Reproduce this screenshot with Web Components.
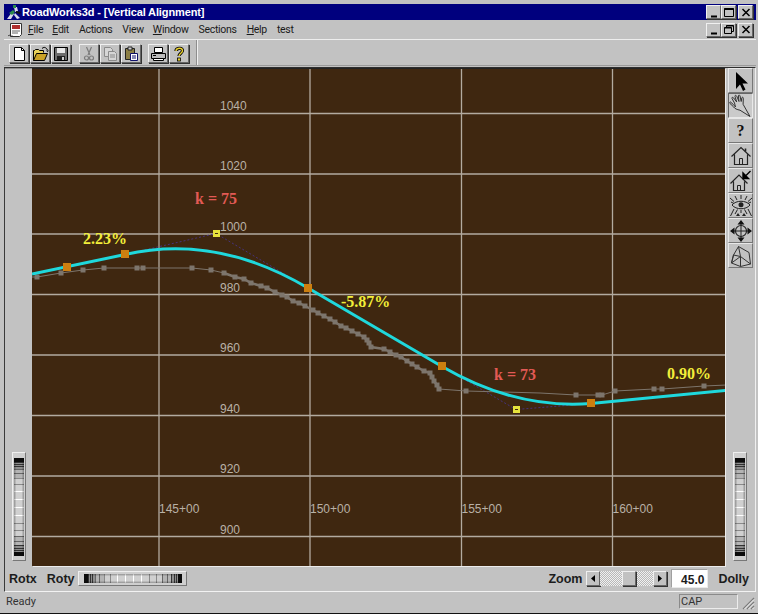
<!DOCTYPE html>
<html>
<head>
<meta charset="utf-8">
<title>RoadWorks3d</title>
<style>
  html, body { margin: 0; padding: 0; background: #c2c2c2; }
  body { font-family: "Liberation Sans", Arial, sans-serif; overflow: hidden; }
</style>
</head>
<body>
<rw-window>
  <rw-titlebar slot="title">RoadWorks3d - [Vertical Alignment]</rw-titlebar>
  <rw-menubar slot="menu"></rw-menubar>
  <rw-toolbar slot="tools"></rw-toolbar>
  <rw-child slot="child">
    <rw-wheel slot="left" dir="v"></rw-wheel>
    <rw-plot slot="plot"></rw-plot>
    <rw-sidetools slot="side"></rw-sidetools>
    <rw-wheel slot="right" dir="v"></rw-wheel>
    <rw-controls slot="controls"></rw-controls>
  </rw-child>
  <rw-statusbar slot="status"></rw-statusbar>
</rw-window>

<script>
// shared win95 bevels
const RAISED = 'border: 1px solid; border-color: #f0f0f0 #666 #666 #f0f0f0; box-shadow: 1px 1px 0 #333;';

const ICONS = {
  doc: '<path d="M4.5 2.5h7l3 3v10h-10z" fill="#fff" stroke="#000"/><path d="M11.5 2.5v3h3" fill="none" stroke="#000"/>',
  open: '<path d="M2.5 15.5v-10h1l1-1h3l1 1h4v2" fill="#e8d25a" stroke="#000"/><path d="M2.5 15.5l3-7h11l-3 7z" fill="#c9a227" stroke="#000"/><path d="M11 3.5c1.5-1.5 3-1.5 4.5 0l1 1.5" fill="none" stroke="#000"/><path d="M15 5.5h3l-1.5 1.5z" fill="#000"/>',
  save: '<path d="M2.5 2.5h13v13h-13z" fill="#6d6d6d" stroke="#000"/><path d="M5 3h8v5H5z" fill="#e8e8e8"/><path d="M5 11h8v4H5z" fill="#202020"/><path d="M10 12h2v3h-2z" fill="#d0d0d0"/>',
  cut: '<path d="M6.5 2l3.5 8M11.5 2L8 10" stroke="#7c7c7c" stroke-width="1.2" fill="none"/><circle cx="6.5" cy="13" r="2" fill="none" stroke="#7c7c7c" stroke-width="1.2"/><circle cx="11.5" cy="13" r="2" fill="none" stroke="#7c7c7c" stroke-width="1.2"/>',
  copy: '<path d="M3.5 2.5h6l2 2v7h-8z" fill="#d6d6d6" stroke="#8a8a8a"/><path d="M7.5 6.5h6l2 2v7h-8z" fill="#d6d6d6" stroke="#8a8a8a"/><path d="M9 10h5M9 12h5" stroke="#8a8a8a"/>',
  paste: '<path d="M3.5 3.5h9v11h-9z" fill="#8c7f45" stroke="#222"/><path d="M6 2h4v3H6z" fill="#cfcfcf" stroke="#222"/><path d="M8.5 8.5h7v7h-7z" fill="#fff" stroke="#10106a"/><path d="M10 11h4M10 13h4" stroke="#10106a" stroke-width="1.2"/>',
  print: '<path d="M5.5 2.5h8v5h-8z" fill="#fff" stroke="#000"/><path d="M2.5 8.5h14v5h-14z" fill="#bdbdbd" stroke="#000"/><path d="M4.5 13.5h10v2h-10z" fill="#fff" stroke="#000"/><path d="M4 10.5h3" stroke="#000"/>',
  help: '<path d="M6 6c0-3 6-4 6.5-.5.3 2.5-3.5 3-3.5 5.5" fill="none" stroke="#000" stroke-width="3.2"/><path d="M6 6c0-3 6-4 6.5-.5.3 2.5-3.5 3-3.5 5.5" fill="none" stroke="#e8d030" stroke-width="1.4"/><rect x="7.5" y="13" width="3" height="3" fill="#e8d030" stroke="#000" stroke-width=".8"/>',
  arrow: '<path d="M7 3v17l4-4.5 3 6.5 2.5-1.5-3-6h5.5z" fill="#000"/>',
  hand: '<path d="M1.5 8c2 1.5 3.5 3 5 5l-1-4L3 4.5c-.5-1.5 1-1.5 1.700-.5l3 4L6 2.500c-.3-1.400 1-1.500 1.700-.4L10 7.500 9.400 2c0-1.300 1.200-1.200 1.600-.2l1.200 5.700.6-3.500c.4-1.200 1.500-1 1.500.3l-.2 6 6.900 12.200-10-6.300c-3-.6-5.200-1.400-6.500-3.400L1 9.500c-.6-1 .1-2 .5-1.500z" fill="none" stroke="#333"/>',
  home: '<path d="M2.5 12.500L12 3.500l9.500 9M5.500 10.500v10h13v-10" fill="none" stroke="#222" stroke-width="1.2"/><path d="M16.500 4.500v3" stroke="#222" stroke-width="1.6"/><path d="M10.500 14.500h3v6h-3z" fill="none" stroke="#222"/>',
  homego: '<path d="M1.500 14.500L10 6l8.500 8.500M4.500 12.500v9h11v-9" fill="none" stroke="#222" stroke-width="1.2"/><path d="M8.500 16.500h3v5h-3z" fill="none" stroke="#222"/><path d="M21.500 2l-6 6M14 4v5.500h5.500z" stroke="#000" stroke-width="1.4" fill="#000"/>',
  eye: '<path d="M3 11c4-5 14-5 18 0-4 5-14 5-18 0z" fill="#c2c2c2" stroke="#222"/><circle cx="12" cy="10.8" r="2.5" fill="#222"/><path d="M12 1v4M6 2l2 4M18 2l-2 4M1 4l4 3.500M23 4l-4 3.500M2 8l3 1.500M22 8l-3 1.500M5 15L1.500 22M19 15l3.500 7M8.500 15.500L6 20M15.500 15.500L18 20M12 16v3" stroke="#222"/><path d="M7 22l2-3 2 3zM13 22l2-3 2 3z" fill="#222"/>',
  move: '<circle cx="12" cy="12" r="5.500" fill="none" stroke="#222" stroke-width="1.2"/><path d="M12 4v16M4 12h16" stroke="#222"/><path d="M12 1l3.500 4.500h-7zM12 23l3.500-4.500h-7zM1 12l4.500-3.500v7zM23 12l-4.500-3.500v7z" fill="#111"/>',
  box: '<path d="M9.500 2.500L20 8.500l1.500 11.500-10 2.500-9-3.500L4.500 11z M9.500 2.500l2 10 10 7.500 M11.500 12.500L4.500 11 M11.500 12.500v10M4.500 11l-2 8 9-6.500" fill="none" stroke="#333"/>'
};

function icon(name, size) {
  return `<svg width="${size}" height="${size}" viewBox="0 0 ${size} ${size}">${ICONS[name]}</svg>`;
}

class RwWindow extends HTMLElement {
  constructor() {
    super();
    this.attachShadow({ mode: 'open' }).innerHTML = `
      <style>
        :host {
          display: flex;
          flex-direction: column;
          box-sizing: border-box;
          width: 758px;
          height: 614px;
          padding: 4px 2px 2px 4px;
          background: #c2c2c2;
          border-bottom: 1px solid #111;
          font-family: "Liberation Sans", Arial, sans-serif;
        }
      </style>
      <slot name="title"></slot>
      <slot name="menu"></slot>
      <slot name="tools"></slot>
      <slot name="child"></slot>
      <slot name="status"></slot>`;
  }
}

class RwTitlebar extends HTMLElement {
  constructor() {
    super();
    const caps = ['min', 'max', 'close'].map(k => `<rw-capbutton kind="${k}"></rw-capbutton>`).join('');
    this.attachShadow({ mode: 'open' }).innerHTML = `
      <style>
        :host {
          display: flex;
          align-items: center;
          height: 16px;
          background: #00007e;
          color: #fff;
          font-weight: bold;
          font-size: 11px;
          letter-spacing: -.12px;
        }
        svg { margin: 0 0 0 2px; flex: none; }
        .txt { flex: 1; }
        .caps { display: flex; margin-right: 3px; }
        rw-capbutton:last-child { margin-left: 2px; }
      </style>
      <svg width="16" height="16" viewBox="0 0 16 16">
        <path d="M1 15l5-7 2 2-3 5zM8 3l3 0 1 4-3 1zM9 9l5 5-3 1-3-4z" fill="#d8d8e8"/>
        <path d="M7 1h3v3H7zM3 9l4-3 2 2-3 3z" fill="#2a8a4a"/>
        <path d="M10 7l5 1-1 2-4-1z" fill="#111"/>
      </svg>
      <span class="txt"><slot></slot></span>
      <div class="caps">${caps}</div>`;
  }
}

class RwCapbutton extends HTMLElement {
  constructor() {
    super();
    const marks = {
      min: '<path d="M3 9.5h6" stroke="#000" stroke-width="2"/>',
      max: '<path d="M1.5 1.5h9v8h-9z" fill="none" stroke="#000"/><path d="M1.5 2h9" stroke="#000" stroke-width="2"/>',
      close: '<path d="M2.5 2l7 7M9.5 2l-7 7" stroke="#000" stroke-width="1.5"/>',
      restore: '<path d="M3.5 3.5V1.5h7v6H8.5" fill="none" stroke="#000"/><path d="M1.5 3.5h7v6h-7z" fill="none" stroke="#000"/><path d="M1.5 4h7M3.5 2h7" stroke="#000"/>'
    };
    this.attachShadow({ mode: 'open' }).innerHTML = `
      <style>
        :host {
          display: flex;
          align-items: center;
          justify-content: center;
          box-sizing: border-box;
          width: 15px;
          height: 14px;
          background: #c2c2c2;
          ${RAISED}
        }
      </style>
      <svg width="12" height="11" viewBox="0 0 12 11">${marks[this.getAttribute('kind')]}</svg>`;
  }
}

class RwMenubar extends HTMLElement {
  constructor() {
    super();
    // [text, underline first letter, left gap]
    const items = [['File', 1, 24], ['Edit', 1, 9], ['Actions', 0, 10], ['View', 0, 10], ['Window', 1, 9], ['Sections', 0, 10], ['Help', 1, 10], ['test', 0, 10]];
    const html = items.map(([t, u, ml]) =>
      `<span style="margin-left:${ml}px">${u ? `<u>${t[0]}</u>${t.slice(1)}` : t}</span>`).join('');
    this.attachShadow({ mode: 'open' }).innerHTML = `
      <style>
        :host {
          display: flex;
          align-items: center;
          position: relative;
          height: 19px;
          font-family: Roboto, "Liberation Sans", sans-serif;
          font-size: 10.5px;
          color: #1a1a1a;
          letter-spacing: -.3px;
        }
        svg { position: absolute; left: 3px; top: 2px; }
        .caps { margin-left: auto; display: flex; margin-right: 3px; }
        rw-capbutton:last-child { margin-left: 2px; }
      </style>
      <svg width="18" height="17" viewBox="0 0 18 17">
        <path d="M3.5 1.5h11v11l-2 2h-9z" fill="#fff" stroke="#333"/>
        <path d="M5 3h8v4H5z" fill="#b03030"/>
        <path d="M5 9h8M5 11h6" stroke="#666"/>
        <path d="M1 14c2-2 3 1 5 0" stroke="#333" fill="none"/>
      </svg>
      ${html}
      <div class="caps">
        <rw-capbutton kind="min"></rw-capbutton>
        <rw-capbutton kind="restore"></rw-capbutton>
        <rw-capbutton kind="close"></rw-capbutton>
      </div>`;
  }
}

class RwToolbutton extends HTMLElement {
  constructor() {
    super();
    this.attachShadow({ mode: 'open' }).innerHTML = `
      <style>
        :host {
          display: flex;
          align-items: center;
          justify-content: center;
          box-sizing: border-box;
          width: 20px;
          height: 19px;
          margin-right: 1px;
          background: #c2c2c2;
          ${RAISED}
        }
        svg { display: block; }
      </style>
      ${icon(this.getAttribute('icon'), 18)}`;
  }
}

class RwToolbar extends HTMLElement {
  constructor() {
    super();
    const group = (names, ml) => `<div style="display:flex;margin-left:${ml}px">` +
      names.map(n => `<rw-toolbutton icon="${n}"></rw-toolbutton>`).join('') + '</div>';
    this.attachShadow({ mode: 'open' }).innerHTML = `
      <style>
        :host {
          display: flex;
          box-sizing: border-box;
          height: 27px;
          padding-top: 4px;
          border-top: 1px solid #ededed;
          border-bottom: 1px solid #9a9a9a;
        }
        .sep { width: 0; height: 25px; margin: -4px 0 0 6px; border-left: 1px solid #8e8e8e; border-right: 1px solid #f0f0f0; }
      </style>
      ${group(['doc', 'open', 'save'], 5)}
      ${group(['cut', 'copy', 'paste'], 7)}
      ${group(['print', 'help'], 6)}
      <div class="sep"></div>`;
  }
}

class RwChild extends HTMLElement {
  constructor() {
    super();
    this.attachShadow({ mode: 'open' }).innerHTML = `
      <style>
        :host {
          display: grid;
          grid-template-columns: 27px 693px 1fr;
          grid-template-rows: 498px 1fr;
          flex: 1;
          box-sizing: border-box;
          margin-top: 1px;
          border-top: 1px solid #2e2e2e;
          border-left: 1px solid #3a3a3a;
          border-right: 1px solid #efefef;
          border-bottom: 1px solid #f2f2f2;
          min-height: 0;
        }
        .left {
          display: flex;
          flex-direction: column;
          justify-content: flex-end;
          align-items: center;
          padding: 0 0 5px 0;
          box-sizing: border-box;
          border-top: 1px solid #8e8e8e;
        }
        .plot { display: block; box-shadow: 1px 1px 0 #ececec; border-top: 1px solid #222; box-sizing: border-box; }
        .right {
          display: flex;
          flex-direction: column;
          justify-content: space-between;
          align-items: flex-start;
          padding: 0 0 5px 3px;
          box-sizing: border-box;
        }
        .wheel-r { margin-left: 5px; display: block; }
        .controls { grid-column: 1 / 4; display: block; }
      </style>
      <div class="left"><slot name="left"></slot></div>
      <div class="plot"><slot name="plot"></slot></div>
      <div class="right">
        <slot name="side"></slot>
        <div class="wheel-r"><slot name="right"></slot></div>
      </div>
      <div class="controls"><slot name="controls"></slot></div>`;
  }
}

class RwPlot extends HTMLElement {
  constructor() {
    super();
    const hy = [113.5, 174, 234, 294.5, 355, 415.5, 476, 536.5];
    const vx = [159, 310, 461.5, 612.5];
    const grid = hy.map(y => `<line x1="32" x2="725" y1="${y}" y2="${y}"/>`).join('') +
      vx.map(x => `<line x1="${x}" x2="${x}" y1="68" y2="566"/>`).join('');
    const elev = [[1040, 106], [1020, 166], [1000, 227], [980, 288], [960, 348], [940, 409], [920, 469], [900, 530]];
    const elevTxt = elev.map(([t, y]) => `<text x="220" y="${y + 4}">${t}</text>`).join('');
    const sta = [[159, '145+00'], [310, '150+00'], [461.5, '155+00'], [612.5, '160+00']];
    const staTxt = sta.map(([x, t]) => `<text x="${x}" y="512.5">${t}</text>`).join('');

    // existing ground samples, read off the picture
    const ground = [[32,277],[37,277],[61,273],[83,270],[104,268],[137,268],[143,268],[192,268],[211,270],[224,273],[235,277],[244,279],[251,283],[261,286],[267,288],[275,292],[282,295],[287,297],[293,301],[299,303],[305,306],[313,310],[318,313],[324,316],[330,319],[335,322],[341,326],[346,328],[352,331],[358,334],[364,337],[367,340],[369,343],[371,347],[384,349],[390,352],[396,355],[401,357],[407,361],[412,364],[417,367],[424,371],[430,373],[432,377],[434,381],[437,385],[439,389],[466,391],[540,393],[576,395],[598,395],[602,395],[615,391],[654,389],[662,389],[704,386],[727,385]];
    const groundLine = ground.map(p => p.join(',')).join(' ');
    const dense = ground.filter(p => p[0] >= 224 && p[0] <= 439).map(p => p.join(',')).join(' ');
    const groundDots = ground.slice(1, -1).filter(p => p[0] !== 540).map(([x, y]) => `<rect x="${x - 2.5}" y="${y - 2.5}" width="5" height="5"/>`).join('');

    const pips = [[67,267],[125,254],[308,288],[442,366],[591,403]].map(([x, y]) =>
      `<rect x="${x - 4}" y="${y - 4}" width="8" height="8" fill="#cc7f10"/>`).join('');
    const pvis = [[213,230],[513,406]].map(([x, y]) =>
      `<rect x="${x}" y="${y}" width="7" height="7" fill="#e6e23c"/><rect x="${x + 2}" y="${y + 3}" width="3" height="1" fill="#3f2810"/>`).join('');

    this.attachShadow({ mode: 'open' }).innerHTML = `
      <style>
        :host { display: block; width: 693px; height: 497px; }
        svg { display: block; background: #3f2710; }
        .grid line { stroke: #b3aba0; stroke-width: 1.3; }
        .axis text { font: 12px "Liberation Sans", Arial, sans-serif; fill: #b9b1a6; }
        .tag text { font: bold 16px "Liberation Serif", "Times New Roman", serif; }
      </style>
      <svg width="693" height="497" viewBox="32 69 693 497">
        <g class="grid">${grid}</g>
        <g class="axis">${elevTxt}${staTxt}</g>
        <polyline points="125,254.5 216,233.5 308,288" fill="none" stroke="#46337c" stroke-dasharray="2 2"/>
        <polyline points="442,366.5 516,409.5 591,403.5" fill="none" stroke="#46337c" stroke-dasharray="2 2"/>
        <polyline points="${groundLine}" fill="none" stroke="#7d756c"/>
        <polyline points="${dense}" fill="none" stroke="#7d756c" stroke-width="2.5"/>
        <g fill="#7d756c">${groundDots}</g>
        <path d="M32 274L125 254.5Q216 233.5 308 288L442 366.5Q516 409.5 591 403.5L726 390.5" fill="none" stroke="#1fd8dc" stroke-width="3"/>
        ${pips}${pvis}
        <g class="tag">
          <text x="195" y="204" fill="#e25a55">k = 75</text>
          <text x="83" y="244" fill="#f2ee3a">2.23%</text>
          <text x="341" y="307" fill="#f2ee3a">-5.87%</text>
          <text x="494" y="380" fill="#e25a55">k = 73</text>
          <text x="667" y="379" fill="#f2ee3a">0.90%</text>
        </g>
      </svg>`;
  }
}

class RwSidetools extends HTMLElement {
  constructor() {
    super();
    const names = ['arrow', 'hand', 'q', 'home', 'homego', 'eye', 'move', 'box'];
    const btns = names.map(n => `<div class="b ${n === 'hand' ? 'on' : ''}">${n === 'q' ? '<span>?</span>' : icon(n, 24)}</div>`).join('');
    this.attachShadow({ mode: 'open' }).innerHTML = `
      <style>
        :host { display: block; width: 25px; }
        .b {
          display: flex;
          align-items: center;
          justify-content: center;
          box-sizing: border-box;
          width: 25px;
          height: 25px;
          background: #c2c2c2;
          border: 1px solid;
          border-color: #e8e8e8 #777 #777 #e8e8e8;
        }
        .on { border-color: #666 #e8e8e8 #e8e8e8 #666; background: #cacaca; }
        svg { display: block; flex: none; }
        span { font: bold 16px "Liberation Serif", serif; color: #111; }
      </style>
      ${btns}`;
  }
}

class RwWheel extends HTMLElement {
  constructor() {
    super();
    const horiz = this.getAttribute('dir') === 'h';
    // ribs are wide and bright at the middle of the wheel, packed and dark at its ends
    const half = [1, 1, 1, 1, 2, 2, 3, 4, 5, 6, 7, 8, 8];
    const sizes = [...half, ...half.slice().reverse()];
    let ribs = '';
    sizes.forEach((size, i) => {
      const d = Math.min(i, sizes.length - 1 - i);
      const bg = d < 4 ? '#333' : d < 7 ? '#8e8e8e' : d < 9 ? '#b4b4b4' : '#d0d0d0';
      const line = d < 4 ? '#0c0c0c' : d < 7 ? '#333' : d < 9 ? '#666' : d < 11 ? '#8a8a8a' : '#fff';
      const start = horiz ? 'left' : 'top';
      const dim = horiz ? 'width' : 'height';
      ribs += `<i style="${dim}:${size}px;background:${bg};border-${start}:1px solid ${line}"></i>`;
    });
    this.attachShadow({ mode: 'open' }).innerHTML = `
      <style>
        :host {
          display: block;
          box-sizing: border-box;
          width: ${horiz ? '109px' : '14px'};
          height: ${horiz ? '15px' : '109px'};
          padding: ${horiz ? '2px 4px 2px 5px' : '5px 1px 4px 1px'};
          background: #cfcfcf;
          border: 1px solid;
          border-color: #efefef #777 #777 #efefef;
        }
        .ribs {
          position: relative;
          display: flex;
          flex-direction: ${horiz ? 'row' : 'column'};
          width: 100%;
          height: 100%;
        }
        .ribs::after {
          content: "";
          position: absolute;
          inset: 0;
          background: linear-gradient(${horiz ? '180deg' : '90deg'}, rgba(0,0,0,.3), transparent 25%, transparent 75%, rgba(0,0,0,.3));
        }
        i { display: block; flex: none; box-sizing: border-box; }
      </style>
      <div class="ribs">${ribs}</div>`;
  }
}

class RwControls extends HTMLElement {
  constructor() {
    super();
    this.attachShadow({ mode: 'open' }).innerHTML = `
      <style>
        :host {
          display: flex;
          align-items: center;
          height: 100%;
          font-size: 12.5px;
          font-weight: bold;
          color: #1c1c1c;
        }
        .rotx { margin-left: 4px; }
        .roty { margin-left: 10px; }
        rw-wheel { margin-left: 3px; }
        .zoom { margin-left: auto; }
        .scroll { display: flex; margin-left: 4px; height: 15px; }
        .arr {
          box-sizing: border-box;
          width: 14px;
          background: #c2c2c2;
          display: flex;
          align-items: center;
          justify-content: center;
          ${RAISED}
        }
        .track {
          width: 53px;
          display: flex;
          justify-content: center;
          padding-left: 5px;
          box-sizing: border-box;
          background: repeating-conic-gradient(#f0f0f0 0 25%, #b8b8b8 0 50%) 0 0 / 2px 2px;
        }
        .thumb { box-sizing: border-box; width: 14px; background: #c2c2c2; ${RAISED} }
        .val {
          box-sizing: border-box;
          width: 37px;
          height: 19px;
          margin-left: 4px;
          padding: 3px 3px 0 0;
          text-align: right;
          background: #fff;
          border: 1px solid;
          border-color: #a0a0a0 #eaeaea #eaeaea #a0a0a0;
          font-size: 12px;
        }
        .dolly { margin: 0 6px 0 10px; }
      </style>
      <span class="rotx">Rotx</span>
      <span class="roty">Roty</span>
      <rw-wheel dir="h"></rw-wheel>
      <span class="zoom">Zoom</span>
      <div class="scroll">
        <div class="arr"><svg width="4" height="7"><path d="M4 0v7L0 3.5z" fill="#000"/></svg></div>
        <div class="track"><div class="thumb"></div></div>
        <div class="arr"><svg width="4" height="7"><path d="M0 0v7l4-3.5z" fill="#000"/></svg></div>
      </div>
      <div class="val">45.0</div>
      <span class="dolly">Dolly</span>`;
  }
}

class RwStatusbar extends HTMLElement {
  constructor() {
    super();
    this.attachShadow({ mode: 'open' }).innerHTML = `
      <style>
        :host {
          display: flex;
          align-items: center;
          height: 19px;
          font-family: Roboto, "Liberation Sans", sans-serif;
          font-size: 11px;
          color: #333;
        }
        .msg { margin-left: 2px; flex: 1; }
        .cap {
          box-sizing: border-box;
          width: 59px;
          height: 15px;
          padding: 0 0 0 1px;
          line-height: 13px;
          border: 1px solid;
          border-color: #8a8a8a #ececec #ececec #8a8a8a;
        }
        svg { margin: 3px 1px 0 3px; }
      </style>
      <span class="msg">Ready</span>
      <span class="cap">CAP</span>
      <svg width="14" height="14" viewBox="0 0 14 14">
        <path d="M13 2L2 13M13 6l-7 7M13 10l-3 3" stroke="#7c7c7c" stroke-width="1.2"/>
        <path d="M13 3.5L3.5 13M13 7.5L7.5 13M13 11.5L11.5 13" stroke="#f2f2f2"/>
      </svg>`;
  }
}

customElements.define('rw-window', RwWindow);
customElements.define('rw-titlebar', RwTitlebar);
customElements.define('rw-capbutton', RwCapbutton);
customElements.define('rw-menubar', RwMenubar);
customElements.define('rw-toolbutton', RwToolbutton);
customElements.define('rw-toolbar', RwToolbar);
customElements.define('rw-child', RwChild);
customElements.define('rw-plot', RwPlot);
customElements.define('rw-sidetools', RwSidetools);
customElements.define('rw-wheel', RwWheel);
customElements.define('rw-controls', RwControls);
customElements.define('rw-statusbar', RwStatusbar);
</script>
</body>
</html>
